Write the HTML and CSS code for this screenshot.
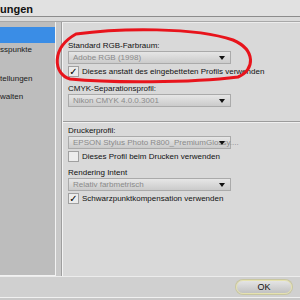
FILE: index.html
```html
<!DOCTYPE html>
<html>
<head>
<meta charset="utf-8">
<link rel="stylesheet" href="styles.css">
</head>
<body>
<div class="window">
  <div class="titlebar">ungen</div>
  <div class="gap"></div>
  <div class="main">
    <div class="sidebar">
      <div class="item selected"></div>
      <div class="item i1">sspunkte</div>
      <div class="item i2">tellungen</div>
      <div class="item i3">walten</div>
    </div>
    <div class="divider"></div>
    <div class="content">
      <div class="section first">
        <div class="label">Standard RGB-Farbraum:</div>
        <div class="select"><span>Adobe RGB (1998)</span><i class="arrow"></i></div>
        <div class="check"><span class="box on">✓</span>Dieses anstatt des eingebetteten Profils verwenden</div>
        <div class="label l2">CMYK-Separationsprofil:</div>
        <div class="select"><span>Nikon CMYK 4.0.0.3001</span><i class="arrow"></i></div>
      </div>
      <div class="section second">
        <div class="label">Druckerprofil:</div>
        <div class="select"><span>EPSON Stylus Photo R800_PremiumGlossy....</span><i class="arrow"></i></div>
        <div class="check"><span class="box"></span>Dieses Profil beim Drucken verwenden</div>
        <div class="label l3">Rendering Intent</div>
        <div class="select"><span>Relativ farbmetrisch</span><i class="arrow"></i></div>
        <div class="check"><span class="box on">✓</span>Schwarzpunktkompensation verwenden</div>
      </div>
    </div>
  </div>
  <div class="bottom">
    <div class="ok">OK</div>
  </div>
  <div class="foot"></div>
  <svg class="mark" width="300" height="300" viewBox="0 0 300 300">
    <path d="M76 34 C 120 28, 195 27, 233 40 C 256 50, 255 70, 238 77 C 190 83, 110 83, 70 79 C 53 74, 51 48, 76 34" fill="none" stroke="#e8141c" stroke-width="3" stroke-linecap="round"/>
  </svg>
</div>
</body>
</html>
```
FILE: styles.css
```css
html, body {
  margin: 0;
  padding: 0;
  width: 300px;
  height: 300px;
  overflow: hidden;
  background: #d4d4d4;
  font-family: "Liberation Sans", Arial, sans-serif;
}
.window {
  position: relative;
  width: 300px;
  height: 300px;
  display: flex;
  flex-direction: column;
}
.titlebar {
  height: 17px;
  line-height: 18px;
  background: #e1e1e1;
  font-weight: bold;
  font-size: 11px;
  color: #111;
  border-bottom: 1px solid #8c8c8c;
  box-sizing: border-box;
}
.gap {
  height: 4px;
  background: #dadada;
  border-bottom: 1px solid #a8a8a8;
}
.main {
  display: flex;
  height: 254px;
}
.sidebar {
  width: 55px;
  background: #bdbdbd;
  border-right: 1px solid #f2f2f2;
  border-bottom: 1px solid #f2f2f2;
  display: flex;
  flex-direction: column;
  padding-top: 5px;
}
.item {
  font-size: 8px;
  color: #1a1a1a;
  height: 12px;
  line-height: 12px;
  white-space: nowrap;
}
.item.selected {
  background: #3a8de6;
  height: 16px;
}
.i1 { margin-top: 1px; }
.i2 { margin-top: 17px; }
.i3 { margin-top: 6px; }
.divider {
  width: 5px;
  background: #c9c9c9;
  border-right: 1px solid #9e9e9e;
}
.content {
  flex: 1;
  background: #d9d9d9;
  border-left: 1px solid #f4f4f4;
  border-top: 1px solid #ececec;
  display: flex;
  flex-direction: column;
}
.section {
  padding-left: 5px;
  display: flex;
  flex-direction: column;
  align-items: flex-start;
}
.first {
  padding-top: 17px;
  padding-bottom: 14px;
  border-bottom: 1px solid #9c9c9c;
  box-shadow: 0 1px 0 #f0f0f0;
}
.second {
  padding-top: 3px;
}
.label {
  font-size: 8px;
  color: #111;
  height: 11px;
  line-height: 11px;
  white-space: nowrap;
}
.l2 { margin-top: 6px; }
.l3 { margin-top: 5px; }
.select {
  position: relative;
  width: 157px;
  height: 11px;
  border: 1px solid #aaaaaa;
  background: linear-gradient(#e6e6e6, #cbcbcb);
  font-size: 8px;
  line-height: 11px;
  color: #8a8a8a;
  padding-left: 4px;
  box-sizing: content-box;
  white-space: nowrap;
}
.arrow {
  position: absolute;
  right: 5px;
  top: 4px;
  width: 0;
  height: 0;
  border-left: 3px solid transparent;
  border-right: 3px solid transparent;
  border-top: 4px solid #111;
}
.check {
  display: flex;
  align-items: center;
  font-size: 8px;
  color: #111;
  height: 11px;
  margin-top: 2px;
  white-space: nowrap;
}
.box {
  width: 9px;
  height: 9px;
  border: 1px solid #a0a0a0;
  background: #ececec;
  margin-right: 3px;
  font-size: 10px;
  line-height: 9px;
  text-align: center;
  color: #000;
  font-weight: bold;
  font-family: "DejaVu Sans", sans-serif;
}
.bottom {
  height: 20px;
  background: #d0d0d0;
  display: flex;
  align-items: center;
  justify-content: flex-end;
  padding-right: 8px;
  border-top: 1px solid #ececec;
}
.ok {
  width: 54px;
  height: 12px;
  border: 1px solid #e6e2b0;
  border-radius: 7px;
  background: linear-gradient(#e4e4e4, #c2c2c2);
  font-size: 9px;
  line-height: 12px;
  text-align: center;
  color: #111;
  box-shadow: 0 0 0 1px #c8c6a0;
}
.foot {
  flex: 1;
  background: #c8c8c8;
  border-top: 1px solid #f0f0f0;
}
.mark {
  position: absolute;
  left: 0;
  top: 0;
  pointer-events: none;
}
```
